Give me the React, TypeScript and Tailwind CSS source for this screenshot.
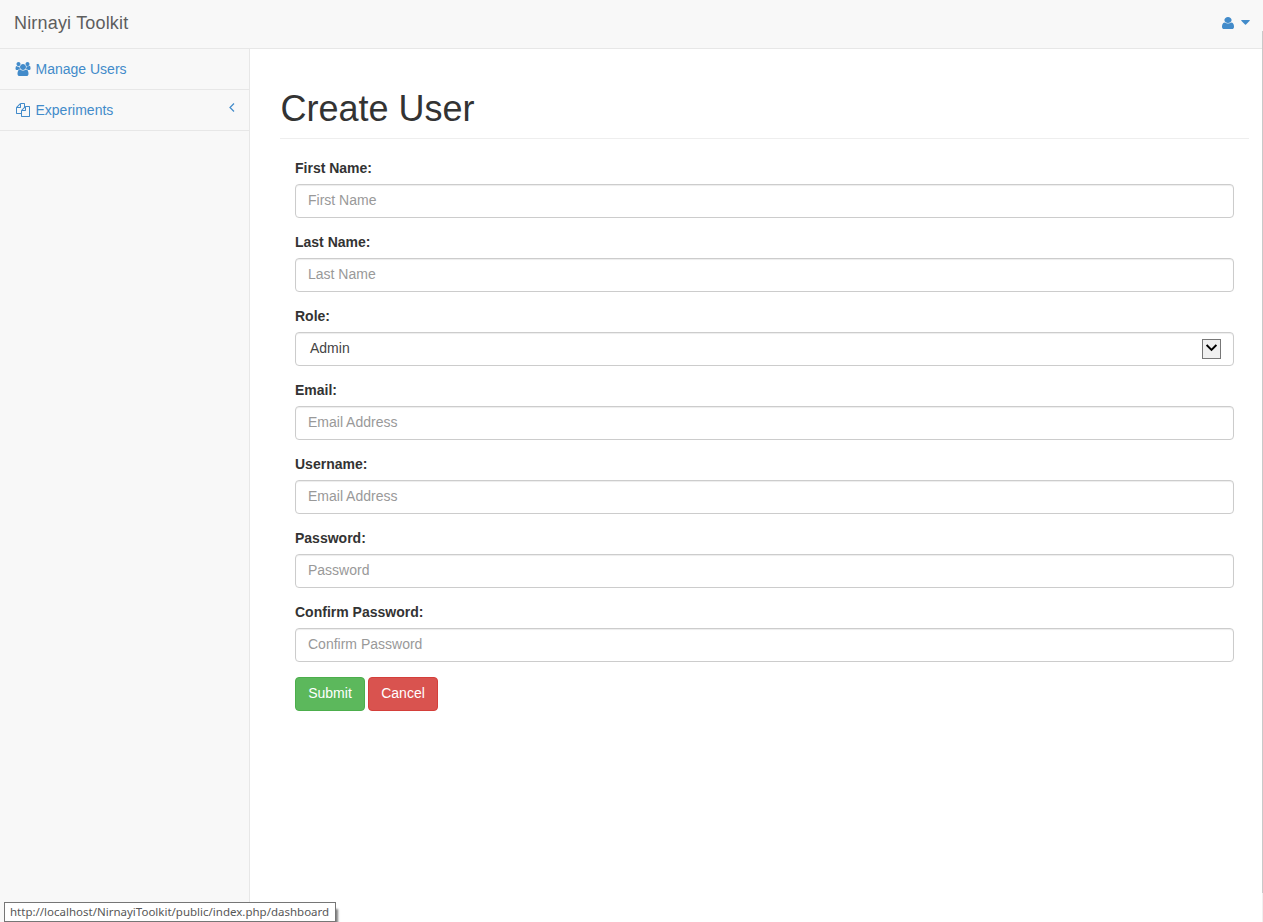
import React from "react";

const userPath =
  "M1536 1399q0 109-62.5 187t-150.5 78h-854q-88 0-150.5-78t-62.5-187q0-85 8.5-160.5t31.5-152 58.5-131 94-89 134.5-34.5q131 128 313 128t313-128q76 0 134.5 34.5t94 89 58.5 131 31.5 152 8.5 160.5zm-256-887q0 159-112.5 271.5t-271.5 112.5-271.5-112.5-112.5-271.5 112.5-271.5 271.5-112.5 271.5 112.5 112.5 271.5z";
const usersPath =
  "M657 896q-162 5-265 128h-134q-82 0-138-40.5t-56-118.5q0-353 124-353 6 0 43.5 21t97.5 42.5 119 21.5q67 0 133-23-5 37-5 66 0 159 90 294zm1071 637q0 120-73 189.5t-194 69.5h-874q-121 0-194-69.5t-73-189.5q0-53 3.5-103.5t14-109 26.5-108.5 43-97.5 62-81 85.5-53.5 111.5-20q10 0 43 21.5t73 48 107 48 135 21.5 135-21.5 107-48 73-48 43-21.5q61 0 111.5 20t85.5 53.5 62 81 43 97.5 26.5 108.5 14 109 3.5 103.5zm-1024-1277q0 106-75 181t-181 75-181-75-75-181 75-181 181-75 181 75 75 181zm704 384q0 159-112.5 271.5t-271.5 112.5-271.5-112.5-112.5-271.5 112.5-271.5 271.5-112.5 271.5 112.5 112.5 271.5zm576 225q0 78-56 118.5t-138 40.5h-134q-103-123-265-128 90-135 90-294 0-29-5-66 66 23 133 23 59 0 119-21.5t97.5-42.5 43.5-21q124 0 124 353zm-128-609q0 106-75 181t-181 75-181-75-75-181 75-181 181-75 181 75 75 181z";
const filesPath =
  "M1696 384q40 0 68 28t28 68v1216q0 40-28 68t-68 28h-960q-40 0-68-28t-28-68v-288h-544q-40 0-68-28t-28-68v-672q0-40 20-88t48-76l408-408q28-28 76-48t88-20h416q40 0 68 28t28 68v328q68-40 128-40h416zm-544 213l-299 299h299v-299zm-640-384l-299 299h299v-299zm196 647l316-316v-416h-384v416q0 40-28 68t-68 28h-416v640h512v-256q0-40 20-88t48-76zm956 804v-1152h-384v416q0 40-28 68t-68 28h-416v640h896z";

const fieldBox =
  "block h-[34px] w-full rounded border border-[#ccc] bg-white px-3 pb-[3px] text-sm text-[#555] shadow-[inset_0_1px_1px_rgba(0,0,0,0.075)] outline-none placeholder:text-[#999]";

function Field({ label, children }: { label: string; children: React.ReactNode }) {
  return (
    <div className="mb-[15px]">
      <label className="mb-[7px] block text-sm leading-[18px] font-bold">{label}</label>
      {children}
    </div>
  );
}

function TextField({ label, hint, type = "text" }: { label: string; hint: string; type?: string }) {
  return (
    <Field label={label}>
      <input type={type} placeholder={hint} className={fieldBox} />
    </Field>
  );
}

export default function App() {
  return (
    <div className="relative flex h-[922px] w-[1263px] flex-col overflow-hidden bg-white font-['Liberation_Sans',Arial,sans-serif] text-sm leading-5 text-[#333]">
      <header className="flex h-[49px] shrink-0 items-start justify-between border-b border-[#e7e7e7] bg-[#f8f8f8] pr-[13.5px] pl-[14px]">
        <a className="pt-[13px] text-lg leading-5 tracking-[0.18px] text-[#5e5e5e]">Nirṇayi Toolkit</a>
        <button className="flex items-start gap-[6.5px] pt-[17px] text-[#428bca]" aria-label="Account">
          <svg className="h-3 w-3" viewBox="256 128 1280 1536" preserveAspectRatio="none" fill="currentColor">
            <path d={userPath} />
          </svg>
          <svg className="mt-[3px] h-[5px] w-[9px]" viewBox="0 0 9 5" fill="currentColor">
            <path d="M0.7 0h7.6q.7 0 .4.7L5 4.6q-.5.5-1 0L.3.7Q0 0 .7 0z" />
          </svg>
        </button>
      </header>
      <div className="flex min-h-0 flex-1">
        <nav className="w-[250px] shrink-0 border-r border-[#e7e7e7] bg-[#f8f8f8] text-[#428bca]">
          <a className="flex h-[41px] items-start border-b border-[#e7e7e7] pt-[10px] pl-[15px]">
            <svg className="mt-[3px] h-[14px] w-4" viewBox="0 0 2048 1792" fill="currentColor">
              <path d={usersPath} />
            </svg>
            <span className="pl-[4.5px]">Manage Users</span>
          </a>
          <a className="flex h-[41px] items-start border-b border-[#e7e7e7] pt-[10px] pr-[14px] pl-4">
            <svg className="mt-[3px] h-[14px] w-[14px]" viewBox="0 0 1792 1792" fill="currentColor">
              <path d={filesPath} />
            </svg>
            <span className="flex-1 pl-[5.5px]">Experiments</span>
            <svg className="mt-[3px] h-[9px] w-[6px]" viewBox="0 0 6 9" fill="none" stroke="currentColor" strokeWidth="1.2">
              <path d="M5 0.5L1 4.5L5 8.5" />
            </svg>
          </a>
        </nav>
        <main className="flex-1 pt-10 pr-[14px] pl-[30px]">
          <h1 className="h-[50px] border-b border-[#eee] pl-[0.5px] text-4xl leading-[40px] font-normal">Create User</h1>
          <form className="px-[15px] pt-5">
            <TextField label="First Name:" hint="First Name" />
            <TextField label="Last Name:" hint="Last Name" />
            <Field label="Role:">
              <div className="flex h-[34px] items-center justify-between rounded border border-[#ccc] pr-3 pl-[14px] shadow-[inset_0_1px_1px_rgba(0,0,0,0.075)]">
                <span className="pb-[3px] text-[#444]">Admin</span>
                <span className="flex h-5 w-[19px] justify-center border border-[#777] bg-[#f0f0f0] pt-1">
                  <svg className="h-2 w-[11px]" viewBox="0 0 11 8" fill="none" stroke="#000" strokeWidth="2">
                    <path d="M0.6 1L5.5 5.9L10.4 1" />
                  </svg>
                </span>
              </div>
            </Field>
            <TextField label="Email:" hint="Email Address" />
            <TextField label="Username:" hint="Email Address" />
            <TextField label="Password:" hint="Password" type="password" />
            <TextField label="Confirm Password:" hint="Confirm Password" type="password" />
            <div className="flex gap-[3px] text-white">
              <button type="button" className="h-[34px] w-[70px] rounded border border-[#4cae4c] bg-[#5cb85c] pb-[2px]">Submit</button>
              <button type="button" className="h-[34px] w-[70px] rounded border border-[#d43f3a] bg-[#d9534f] pb-[2px]">Cancel</button>
            </div>
          </form>
        </main>
      </div>
      <div className="absolute top-[31px] right-0 h-[862px] w-px bg-[#c9c9c9]" />
      <div className="absolute right-0 bottom-0 h-[29px] w-px bg-[#f0f0f0]" />
      <div className="absolute top-[902px] left-1 flex h-5 w-[332px] items-center border border-[#767676] bg-white pl-[5px] font-['Noto_Sans',sans-serif] text-[11.5px] whitespace-nowrap text-[#575757] shadow-[3px_6px_2px_-1px_rgba(0,0,0,0.5)]">
        http://localhost/NirnayiToolkit/public/index.php/dashboard
      </div>
    </div>
  );
}
